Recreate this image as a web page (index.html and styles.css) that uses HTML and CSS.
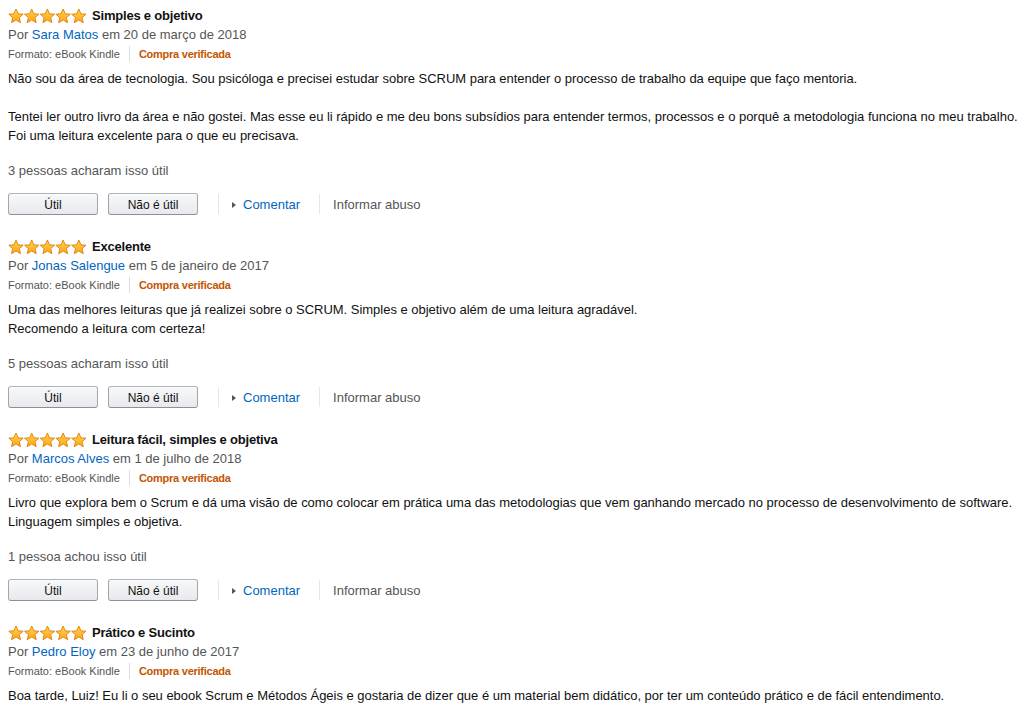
FILE: index.html
```html
<!DOCTYPE html>
<html lang="pt-BR">
<head>
    <meta charset="UTF-8">
    <meta name="viewport" content="width=device-width, initial-scale=1.0">
    <title>Avaliações de clientes</title>
    <link rel="stylesheet" href="styles.css">
</head>
<body>
    <svg width="0" height="0" class="defs">
        <defs>
            <linearGradient id="star-fill" x1="0" y1="0" x2="0" y2="1">
                <stop offset="0" stop-color="#ffd54a"/>
                <stop offset="1" stop-color="#ffa41c"/>
            </linearGradient>
            <polygon id="star" points="8,1 10.1,5.8 15.2,6.2 11.3,9.6 12.5,14.7 8,12 3.5,14.7 4.7,9.6 0.8,6.2 5.9,5.8" fill="url(#star-fill)" stroke="#de7f0b" stroke-width="0.9" stroke-linejoin="round"/>
        </defs>
    </svg>

    <div class="review">
        <div class="review-title">
            <svg class="stars" width="79" height="16" viewBox="0 0 79 16"><use href="#star"/><use href="#star" x="15.7"/><use href="#star" x="31.4"/><use href="#star" x="47.1"/><use href="#star" x="62.8"/></svg>
            <span class="title-text">Simples e objetivo</span>
        </div>
        <div class="byline">Por <a href="#">Sara Matos</a> em 20 de março de 2018</div>
        <div class="meta"><span>Formato: eBook Kindle</span><span class="sep"></span><span class="verified">Compra verificada</span></div>
        <div class="review-body">
            Não sou da área de tecnologia. Sou psicóloga e precisei estudar sobre SCRUM para entender o processo de trabalho da equipe que faço mentoria.<br><br>
            Tentei ler outro livro da área e não gostei. Mas esse eu li rápido e me deu bons subsídios para entender termos, processos e o porquê a metodologia funciona no meu trabalho.<br>
            Foi uma leitura excelente para o que eu precisava.
        </div>
        <div class="helpful">3 pessoas acharam isso útil</div>
        <div class="actions">
            <button class="vote">Útil</button>
            <button class="vote">Não é útil</button>
            <span class="divider"></span>
            <a href="#" class="comment">Comentar</a>
            <span class="divider"></span>
            <a href="#" class="report">Informar abuso</a>
        </div>
    </div>

    <div class="review">
        <div class="review-title">
            <svg class="stars" width="79" height="16" viewBox="0 0 79 16"><use href="#star"/><use href="#star" x="15.7"/><use href="#star" x="31.4"/><use href="#star" x="47.1"/><use href="#star" x="62.8"/></svg>
            <span class="title-text">Excelente</span>
        </div>
        <div class="byline">Por <a href="#">Jonas Salengue</a> em 5 de janeiro de 2017</div>
        <div class="meta"><span>Formato: eBook Kindle</span><span class="sep"></span><span class="verified">Compra verificada</span></div>
        <div class="review-body">
            Uma das melhores leituras que já realizei sobre o SCRUM. Simples e objetivo além de uma leitura agradável.<br>
            Recomendo a leitura com certeza!
        </div>
        <div class="helpful">5 pessoas acharam isso útil</div>
        <div class="actions">
            <button class="vote">Útil</button>
            <button class="vote">Não é útil</button>
            <span class="divider"></span>
            <a href="#" class="comment">Comentar</a>
            <span class="divider"></span>
            <a href="#" class="report">Informar abuso</a>
        </div>
    </div>

    <div class="review">
        <div class="review-title">
            <svg class="stars" width="79" height="16" viewBox="0 0 79 16"><use href="#star"/><use href="#star" x="15.7"/><use href="#star" x="31.4"/><use href="#star" x="47.1"/><use href="#star" x="62.8"/></svg>
            <span class="title-text">Leitura fácil, simples e objetiva</span>
        </div>
        <div class="byline">Por <a href="#">Marcos Alves</a> em 1 de julho de 2018</div>
        <div class="meta"><span>Formato: eBook Kindle</span><span class="sep"></span><span class="verified">Compra verificada</span></div>
        <div class="review-body">
            Livro que explora bem o Scrum e dá uma visão de como colocar em prática uma das metodologias que vem ganhando mercado no processo de desenvolvimento de software.<br>
            Linguagem simples e objetiva.
        </div>
        <div class="helpful">1 pessoa achou isso útil</div>
        <div class="actions">
            <button class="vote">Útil</button>
            <button class="vote">Não é útil</button>
            <span class="divider"></span>
            <a href="#" class="comment">Comentar</a>
            <span class="divider"></span>
            <a href="#" class="report">Informar abuso</a>
        </div>
    </div>

    <div class="review">
        <div class="review-title">
            <svg class="stars" width="79" height="16" viewBox="0 0 79 16"><use href="#star"/><use href="#star" x="15.7"/><use href="#star" x="31.4"/><use href="#star" x="47.1"/><use href="#star" x="62.8"/></svg>
            <span class="title-text">Prático e Sucinto</span>
        </div>
        <div class="byline">Por <a href="#">Pedro Eloy</a> em 23 de junho de 2017</div>
        <div class="meta"><span>Formato: eBook Kindle</span><span class="sep"></span><span class="verified">Compra verificada</span></div>
        <div class="review-body">
            Boa tarde, Luiz! Eu li o seu ebook Scrum e Métodos Ágeis e gostaria de dizer que é um material bem didático, por ter um conteúdo prático e de fácil entendimento.
        </div>
    </div>
</body>
</html>
```

FILE: styles.css
```css
body {
    margin: 0;
    padding: 6px 8px 0;
    font-family: "Liberation Sans", Arial, sans-serif;
    font-size: 13px;
    line-height: 19px;
    color: #111;
    background-color: #fff;
}

.defs {
    position: absolute;
}

a {
    color: #0066c0;
    text-decoration: none;
}

.review {
    margin-bottom: 22px;
}

.review-title {
    display: flex;
    align-items: center;
    gap: 5px;
    height: 19px;
}

.title-text {
    font-weight: bold;
    letter-spacing: -0.2px;
}

.byline {
    color: #555;
}

.meta {
    display: flex;
    align-items: center;
    height: 20px;
    font-size: 11px;
    color: #555;
}
.meta .sep {
    width: 1px;
    height: 16px;
    margin: 0 9px;
    background-color: #ddd;
}
.meta .verified {
    color: #c45500;
    font-weight: bold;
    letter-spacing: -0.25px;
}

.review-body {
    margin-top: 5px;
    letter-spacing: -0.02px;
    white-space: nowrap;
}

.helpful {
    margin-top: 16px;
    color: #555;
}

.actions {
    display: flex;
    align-items: center;
    margin-top: 13px;
    height: 22px;
}

.vote {
    width: 90px;
    height: 22px;
    margin-right: 10px;
    padding: 1px 0 0;
    font-family: inherit;
    font-size: 12px;
    color: #111;
    background: linear-gradient(to bottom, #f7f8fa, #e7e9ec);
    border: 1px solid #adb1b8;
    border-color: #adb1b8 #a2a6ac #8d9096;
    border-radius: 3px;
    box-shadow: 0 1px 0 rgba(255,255,255,.6) inset;
    cursor: pointer;
}

.divider {
    width: 1px;
    height: 20px;
    margin: 0 13px 0 10px;
    background-color: #e7e7e7;
}

.comment {
    margin-right: 9px;
}
.comment::before {
    content: "";
    display: inline-block;
    margin: 0 7px 1px 0;
    border-left: 4px solid #555;
    border-top: 3px solid transparent;
    border-bottom: 3px solid transparent;
}

.report {
    color: #555;
}
```
